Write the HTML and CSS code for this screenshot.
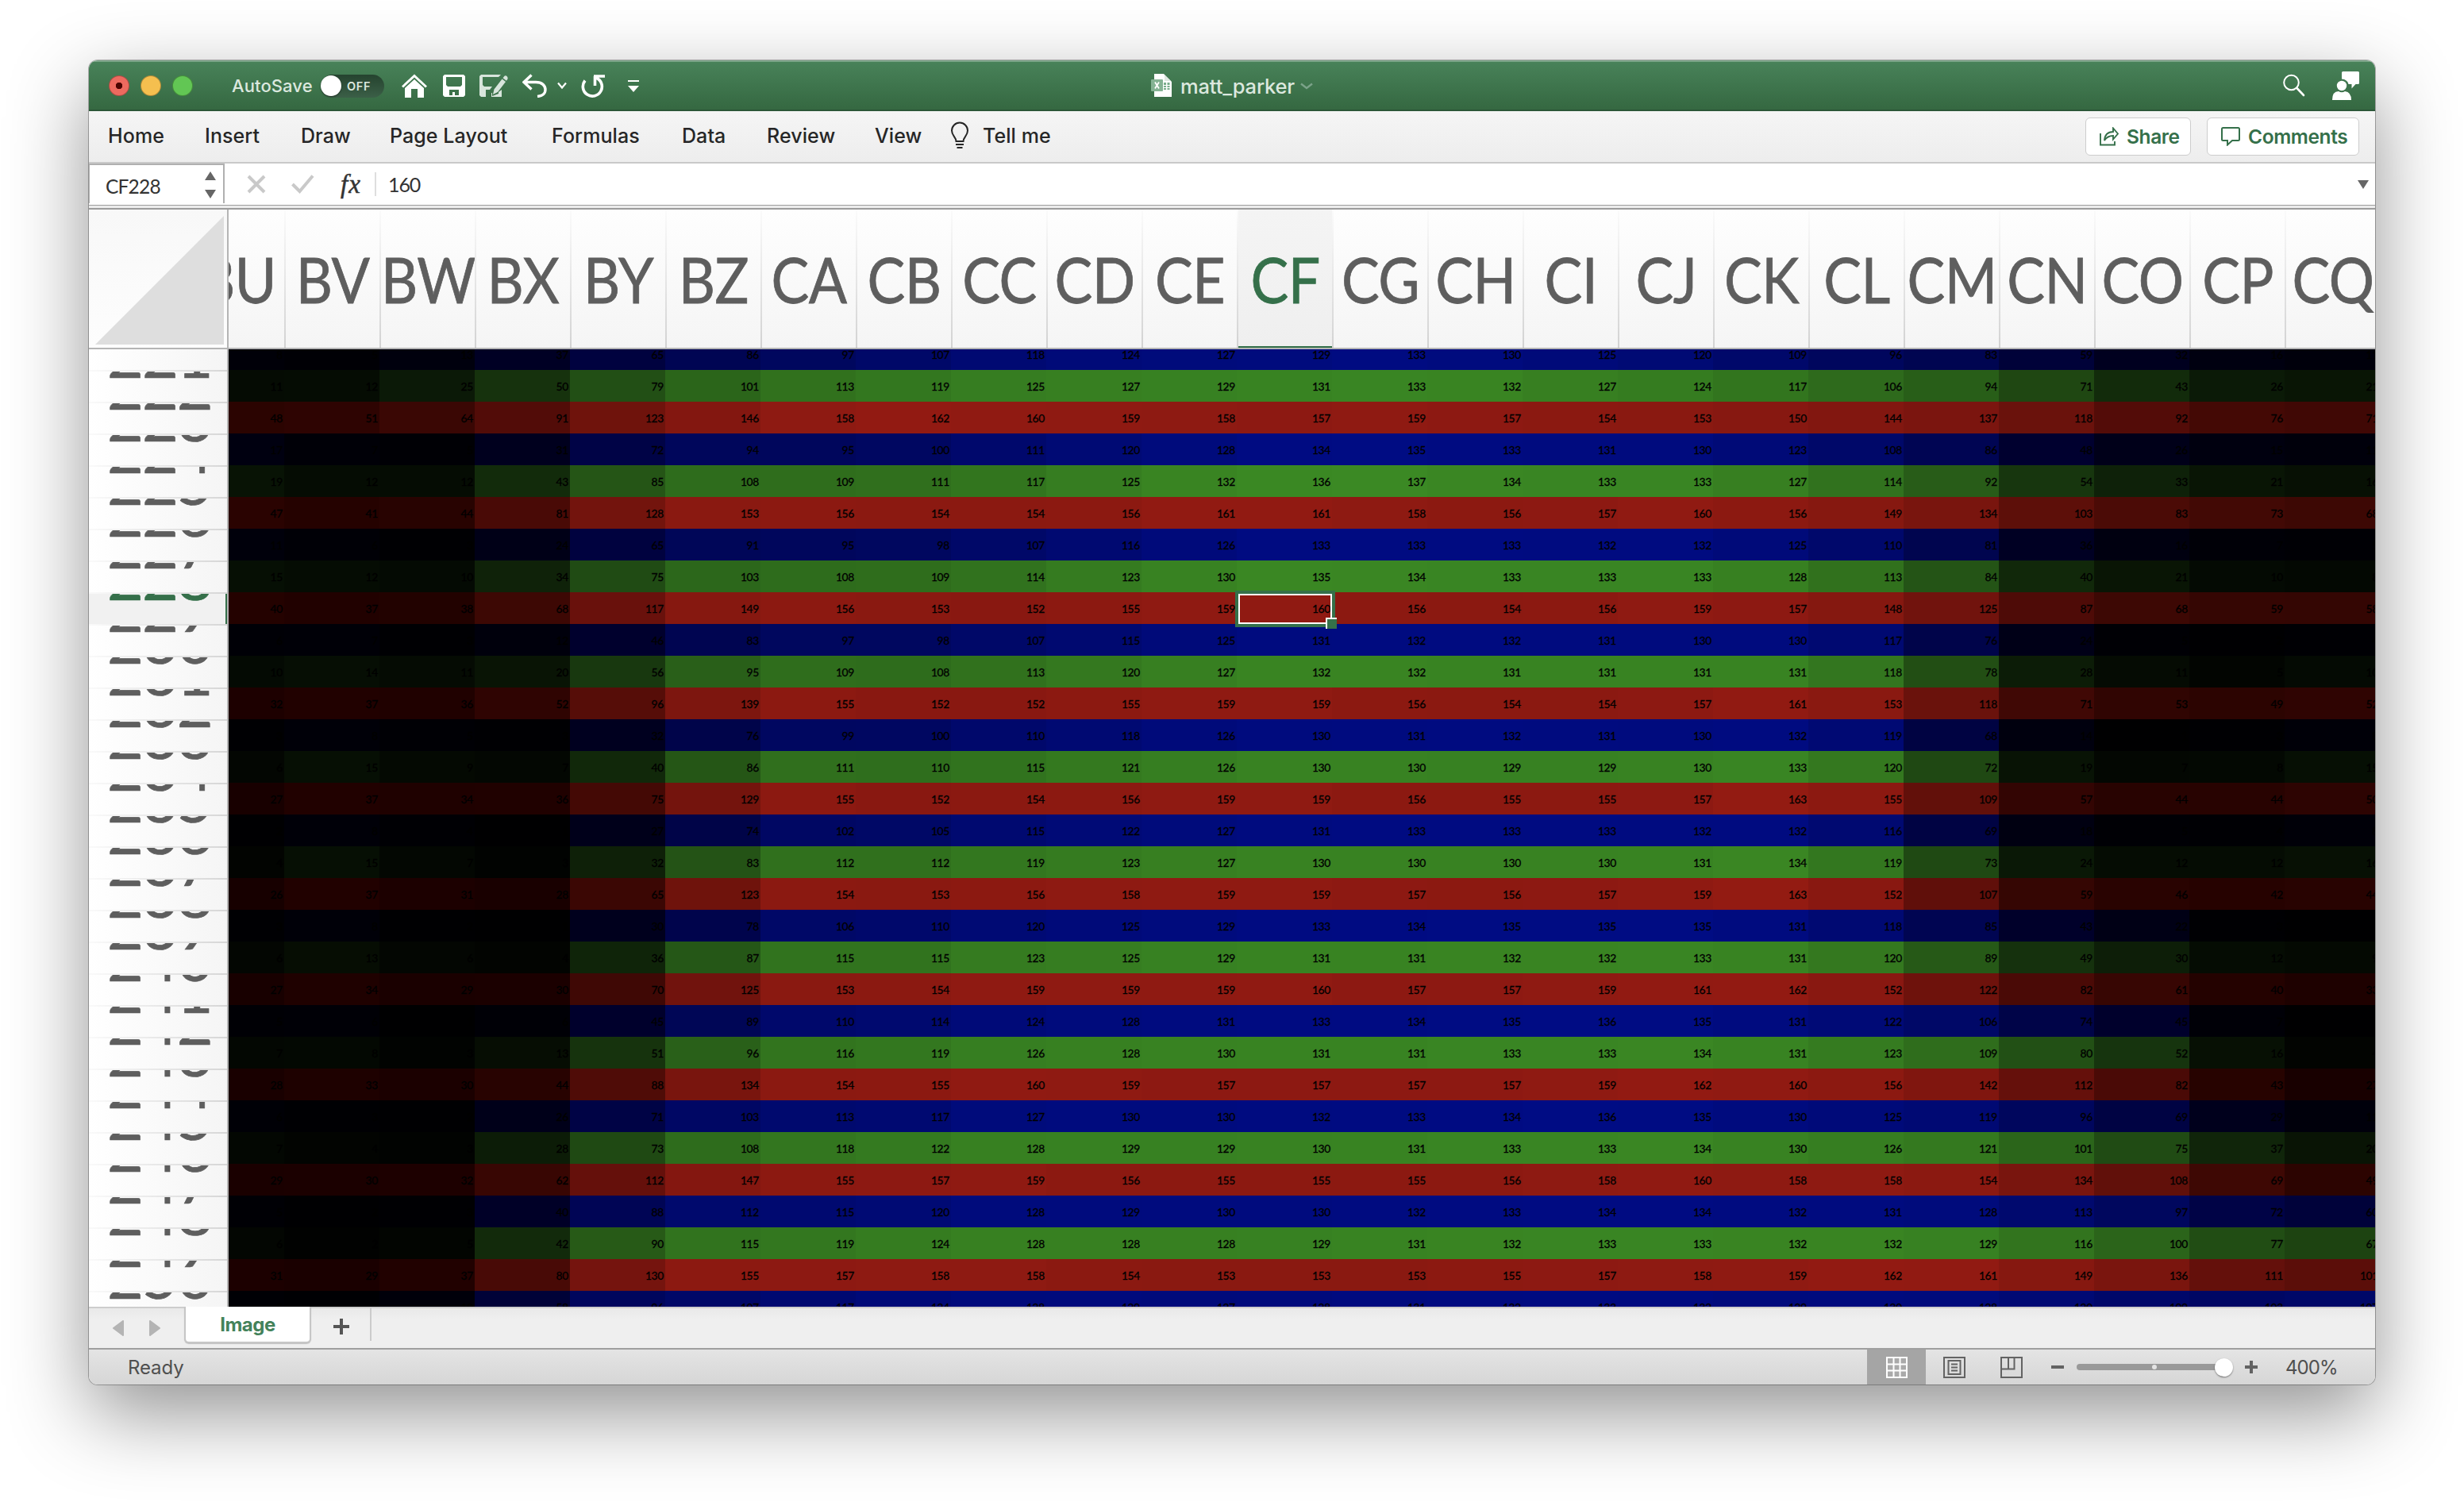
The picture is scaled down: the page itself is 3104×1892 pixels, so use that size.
FILE: index.html
```html
<!DOCTYPE html>
<html lang="en">
<head>
<meta charset="utf-8">
<title>matt_parker</title>
<link rel="stylesheet" href="styles.css">
</head>
<body>
<div class="window">
  <header class="titlebar">
    <div class="lights"><i class="light close"></i><i class="light min"></i><i class="light max"></i></div>
    <span class="autosave">AutoSave</span>
    <span class="toggle"><i class="knob"></i><b>OFF</b></span>
    <div class="quick">
      <svg width="32" height="30" viewBox="0 0 32 30"><path d="M1 16.500 16 2.500 31 16.500" fill="none" stroke="#fff" stroke-width="3"/><path d="M4 18 16 7 28 18V30H20V19H12V30H4Z" fill="#fff"/></svg>
      <svg width="28" height="28" viewBox="0 0 28 28"><path fill="#fff" fill-rule="evenodd" d="M2 0H26L28 2V26L26 28H2L0 26V2ZM4 3V13L6 15H22L24 13V3ZM8 19V28H12V22H15V28H20V19Z"/><path fill="#fff" d="M8 26H20V28H8Z"/></svg>
      <svg width="36" height="28" viewBox="0 0 36 28"><path fill="#d8e5dc" fill-rule="evenodd" d="M2 0H27L24 3H4V13L6 15H16L13 19H8V28H2L0 26V2ZM12 23H15V28H28V19L24 22V24L16 27V23Z"/><path d="M17 25 18.500 18.500 28.500 5.500 33 9 23 22Z" fill="#d8e5dc"/><path d="M29.500 4.300 31.500 1.800Q33 .8 34.500 2T35.500 5.200L34 7.700Z" fill="#d8e5dc"/></svg>
      <svg width="31" height="30" viewBox="0 0 31 30"><path d="M11.500 1.500 2 10.500 11.500 19.500M2.500 10.500H17C25 10.500 29 15 29 20S25 28 19 28.500" fill="none" stroke="#fff" stroke-width="3.400"/></svg>
      <svg width="12" height="10" viewBox="0 0 12 10"><path d="M1 1.500 6 7.500 11 1.500" fill="none" stroke="#fff" stroke-width="2.200"/></svg>
      <svg width="32" height="30" viewBox="0 0 32 30"><path d="M6 8.500A12 12 0 1 0 20 5M17 3H31M18.500 15V3" fill="none" stroke="#fff" stroke-width="3.600"/></svg>
      <svg width="14" height="16" viewBox="0 0 14 16"><path d="M0 1H14V3H0ZM0 8H14L7 16Z" fill="#fff"/></svg>
    </div>
    <div class="doc">
      <svg width="27" height="30" viewBox="0 0 27 30"><path d="M4 0H16L26 10V29H4Z" fill="#fff"/><path d="M17 1.500 25 9H17Z" fill="#dfe9e2"/><path d="M16 11H19V14H16ZM20.500 11H23.500V14H20.500ZM16 15H19V17H16ZM20.500 15H23.500V17H20.500ZM16 18H19V20H16ZM20.500 18H23.500V20H20.500Z" fill="#79ad8b"/><rect y="7" width="15" height="15" rx="1" fill="#85b394"/><path d="M5 10.500 10 18.500M10 10.500 5 18.500" stroke="#fff" stroke-width="1.800"/></svg>
      <span>matt_parker</span>
      <svg class="dim" width="16" height="9" viewBox="0 0 16 9"><path d="M1 1.500 8 7 15 1.500" fill="none" stroke="#7ba289" stroke-width="2.400"/></svg>
    </div>
    <div class="right">
      <svg width="28" height="30" viewBox="0 0 28 30"><circle cx="10.500" cy="11" r="9.300" fill="none" stroke="#fff" stroke-width="2"/><path d="M17.500 18 26 27" stroke="#fff" stroke-width="2.600" stroke-linecap="round"/></svg>
      <svg width="34" height="36" viewBox="0 0 34 36"><path d="M13.500 0H32.500Q34 0 34 1.500V14.500Q34 16 32.500 16H29.500L24.500 21.500V16H20.500Q19 10 12 9.500V1.500Q12 0 13.500 0Z" fill="#fff"/><circle cx="12" cy="18" r="6.200" fill="#fff"/><path d="M0 36Q0 25 8 25Q12 27.500 16 25Q24 26 24 36Z" fill="#fff"/></svg>
    </div>
  </header>

  <nav class="ribbon">
    <div class="tabs">
      <span>Home</span><span>Insert</span><span>Draw</span><span>Page Layout</span><span>Formulas</span><span>Data</span><span>Review</span><span>View</span>
      <span class="tell"><svg width="24" height="36" viewBox="0 0 24 36"><path d="M7.500 25C7.500 20 2 18 2 11.500A10 10 0 0 1 22 11.500C22 18 16.500 20 16.500 25Z" fill="none" stroke="#262626" stroke-width="2"/><path d="M7 29H17M8.500 33H15.500" stroke="#262626" stroke-width="2.200"/></svg>Tell me</span>
    </div>
    <button class="btn share"><svg width="24" height="24" viewBox="0 0 24 24"><path d="M1 8V22.500H19V18M6 17C6.500 9.500 11 6 17 6V1.500L23 8.500 17 15.500V11C12 11 8.500 13 6 17Z" fill="none" stroke="#35704a" stroke-width="1.900"/></svg>Share</button>
    <button class="btn comments"><svg width="24" height="24" viewBox="0 0 24 24"><path d="M2.500 1H21.500Q23 1 23 2.500V15.500Q23 17 21.500 17H14L8 22.500V17H2.500Q1 17 1 15.500V2.500Q1 1 2.500 1Z" fill="none" stroke="#35704a" stroke-width="2"/></svg>Comments</button>
  </nav>

  <div class="formula">
    <div class="namebox"><span>CF228</span><svg width="14" height="34" viewBox="0 0 14 34"><path d="M7 0 14 11H0ZM7 34 0 23H14Z" fill="#666"/></svg></div>
    <div class="fbtns">
      <svg width="24" height="24" viewBox="0 0 24 24"><path d="M2 2 22 22M22 2 2 22" stroke="#c9c9c9" stroke-width="4"/></svg>
      <svg width="29" height="24" viewBox="0 0 29 24"><path d="M1.500 12 10.500 21 27 1.500" fill="none" stroke="#c9c9c9" stroke-width="4"/></svg>
      <span class="fx">fx</span>
    </div>
    <div class="value">160</div>
    <svg class="drop" width="14" height="11" viewBox="0 0 14 11"><path d="M0 0H14L7 11Z" fill="#666"/></svg>
  </div>

  <main class="sheet">
    <div class="corner"><svg width="162" height="162" viewBox="0 0 162 162"><path d="M162 0V162H0Z" fill="#dedede"/></svg></div>
    <div class="colheads"><div class="colstrip" id="cols"></div></div>
    <div class="rowheads" id="rows"></div>
    <div class="cells"><div class="cellstrip" id="cells"></div></div>
  </main>

  <footer class="sheets">
    <div class="arrows"><svg width="60" height="20" viewBox="0 0 60 20"><path d="M13 1V19L1 10ZM47 1V19L59 10Z" fill="#b4b4b4" stroke="#b4b4b4" stroke-width="2" stroke-linejoin="round"/></svg></div>
    <div class="tab">Image</div>
    <div class="add"><svg width="20" height="20" viewBox="0 0 20 20"><path d="M10 0V20M0 10H20" stroke="#555" stroke-width="4"/></svg></div>
  </footer>

  <div class="status">
    <span class="ready">Ready</span>
    <div class="view on"><svg width="27" height="27" viewBox="0 0 27 27"><path d="M1 1H26V26H1ZM9.500 1V26M17.500 1V26M1 9.500H26M1 17.500H26" fill="#aaa" stroke="#fff" stroke-width="2"/></svg></div>
    <div class="view"><svg width="28" height="27" viewBox="0 0 28 27"><path d="M1 1H27V26H1ZM6.500 5H21.500V22H6.500ZM10 9.500H18M10 13.500H18M10 17.500H18" fill="none" stroke="#636363" stroke-width="2"/></svg></div>
    <div class="view"><svg width="28" height="27" viewBox="0 0 28 27"><path d="M1 1H27V26H1ZM1 15.500H17.500V1M10 1V15.500" fill="none" stroke="#636363" stroke-width="2"/></svg></div>
    <i class="minus"></i>
    <div class="slider"><i class="mid"></i><i class="thumb"></i></div>
    <svg class="plus" width="16" height="16" viewBox="0 0 16 16"><path d="M8 0V16M0 8H16" stroke="#636363" stroke-width="4"/></svg>
    <span class="zoom">400%</span>
  </div>
</div>
<script src="script.js"></script>
</body>
</html>
```
FILE: styles.css
```css
* { box-sizing: border-box; }
body {
  margin: 0;
  padding: 76px 112px 0;
  height: 1892px;
  background: #fff;
  overflow: hidden;
  font-family: Inter, "Liberation Sans", sans-serif;
}
svg { display: block; flex: none; }
i { display: block; flex: none; }
.window {
  width: 2880px;
  height: 1668px;
  display: flex;
  flex-direction: column;
  border-radius: 11px;
  overflow: hidden;
  background: #fff;
  box-shadow: 0 0 0 1px rgba(0,0,0,.28), 0 36px 100px rgba(0,0,0,.43);
}

/* title bar */
.titlebar {
  height: 64px;
  flex: none;
  display: grid;
  grid-template-columns: 180px 112px 102px 944px 1fr 96px;
  align-items: center;
  background: linear-gradient(#488259, #356841);
  border-top: 2px solid #7ba588;
  border-bottom: 2px solid #2b5738;
  color: #dce8df;
}
.lights { display: flex; gap: 14px; padding-left: 25px; }
.light { width: 26px; height: 26px; border-radius: 50%; border: 1px solid rgba(0,0,0,.28); }
.close { background: radial-gradient(circle, #4c0300 0 4px, #ed6a5f 4.500px); }
.min { background: #f5bf4f; }
.max { background: #62c654; }
.autosave { font-size: 22px; font-weight: 500; letter-spacing: .1px; }
.toggle {
  width: 80px;
  height: 29px;
  display: flex;
  align-items: center;
  gap: 7px;
  border-radius: 15px;
  background: linear-gradient(#25432f, #3b5f47);
}
.knob { width: 26px; height: 26px; border-radius: 50%; background: #fff; box-shadow: 0 1px 2px rgba(0,0,0,.5); }
.toggle b { font-size: 14.500px; font-weight: 600; letter-spacing: .7px; }
.quick { display: grid; grid-template-columns: 52px 46px 54px 44px 29px 60px 14px; align-items: center; }
.doc { display: flex; align-items: center; font-size: 25.500px; font-weight: 500; }
.doc span { margin: 0 7px 0 10px; letter-spacing: -.15px; }
.right { display: flex; align-items: center; width: 96px; justify-content: space-between; }
.titlebar .right { margin-left: -20px; }

/* ribbon */
.ribbon {
  height: 66px;
  flex: none;
  display: flex;
  align-items: center;
  gap: 20px;
  padding: 0 20px 0 24px;
  background: linear-gradient(#f5f5f5, #ededed);
  border-bottom: 2px solid #c9c9c9;
}
.tabs {
  flex: 1;
  display: grid;
  grid-template-columns: 122px 121px 112px 204px 164px 107px 136px 95px auto;
  align-items: center;
  padding-bottom: 2px;
  font-size: 25px;
  font-weight: 500;
  letter-spacing: .08px;
  color: #262626;
}
.tell { display: flex; align-items: center; gap: 17px; }
.btn {
  height: 48px;
  display: flex;
  align-items: center;
  gap: 10px;
  padding: 0 0 1px 17px;
  border: 1.500px solid #cdcdcd;
  border-radius: 6px;
  background: #fff;
  color: #35704a;
  font: 600 24.500px Inter, sans-serif;
  letter-spacing: -.4px;
  white-space: nowrap;
}
.share { width: 133px; }
.comments { width: 192px; }

/* formula bar */
.formula {
  height: 58px;
  flex: none;
  display: flex;
  align-items: center;
  padding-bottom: 6px;
  background: linear-gradient(#fff 0 52px, #9c9c9c 52px 53.500px, #ececec 53.500px 56px, #9c9c9c 56.500px);
  font-family: Lato, sans-serif;
  color: #333;
}
.namebox {
  width: 171px;
  height: 50px;
  align-self: flex-start;
  display: flex;
  align-items: center;
  justify-content: space-between;
  padding: 2px 9px 0 20px;
  border: 2px solid #b0b0b0;
  border-width: 2px 2px 0 1px;
  background: #fff;
  font-size: 24.500px;
}
.namebox span { letter-spacing: -.8px; padding-top: 3px; }
.fbtns { display: grid; grid-template-columns: 56px 62px 43px; align-items: center; padding-left: 28px; }
.fx { font: italic 33px "Liberation Serif", serif; line-height: 36px; letter-spacing: 1px; -webkit-text-stroke: .5px #333; }
.value {
  flex: 1;
  height: 30px;
  line-height: 31px;
  padding-left: 15px;
  border-left: 2px solid #dedede;
  font-size: 25px;
  letter-spacing: -1.100px;
}
.drop { margin-right: 8px; }

/* grid */
.sheet {
  height: 1382px;
  flex: none;
  display: grid;
  grid-template-columns: 176px 2704px;
  grid-template-rows: 176px 1206px;
  font-family: Lato, sans-serif;
  overflow: hidden;
}
.corner {
  padding: 8px 0 0 8px;
  border-right: 2px solid #b5b5b5;
  border-bottom: 2px solid #b5b5b5;
  background: linear-gradient(#f8f8f8, #fdfdfd);
}
.colheads { overflow: hidden; border-bottom: 2px solid #b5b5b5; }
.colstrip { display: flex; margin-left: -50px; width: 2760px; }
.col {
  width: 120px;
  height: 174px;
  flex: none;
  display: flex;
  justify-content: safe center;
  overflow: hidden;
  border-left: 2px solid;
  border-image: linear-gradient(#fbfbfb, #d2d2d2) 1;
  background: linear-gradient(#fefefe, #f5f5f5);
  color: #5e5e5e;
  font-size: 71.500px;
  line-height: 175px;
  -webkit-text-stroke: .7px;
}
.col span { letter-spacing: -.5px; transform: scaleY(1.105); }
.col.sel { background: linear-gradient(#f4f4f4, #efefef); color: #35704a; box-shadow: inset 0 -2px #35704a; }
.rowheads { overflow: hidden; border-right: 2px solid #b5b5b5; padding-top: 26px; background: linear-gradient(90deg, #fff, #f5f5f5); }
.row {
  height: 40px;
  overflow: hidden;
  padding-left: 23px;
  border-top: 2px solid;
  border-image: linear-gradient(90deg, #fafafa, #d6d6d6) 1;
  color: #5e5e5e;
  font-size: 79px;
  line-height: 79px;
  letter-spacing: -1.900px;
  -webkit-text-stroke: .7px;
}
.row span { display: block; margin-top: -62px; }
.row.sel { color: #35704a; background: #f1f1f1; box-shadow: inset -2px 0 #35704a; }
.cells { overflow: hidden; background: #000; }
.cellstrip {
  display: grid;
  grid-template-columns: repeat(23, 120px);
  grid-auto-rows: 40px;
  margin: -14px 0 0 -50px;
}
.cell {
  height: 40px;
  padding-right: 2px;
  text-align: right;
  font-size: 13.800px;
  line-height: 42px;
  letter-spacing: -.3px;
  -webkit-text-stroke: .3px #000;
  color: #000;
}
.red { background: rgb(calc(var(--v) * .9) calc(var(--v) * .2 - 6) calc(var(--v) * .15 - 6)); }
.green { background: rgb(calc(var(--v) * .43) var(--v) calc(var(--v) * .26)); }
.blue { background: rgb(0 calc(var(--v) * .13 - 6) calc(var(--v) * .97)); }
.cell.active { position: relative; }
.cursor {
  position: absolute;
  inset: -2px -4px -4px -2px;
  border: 4px solid #35704a;
}
.cursor::before { content: ""; position: absolute; inset: 0; border: 2px solid #fff; }
.cursor::after {
  content: "";
  position: absolute;
  right: -6px;
  bottom: -6px;
  width: 12px;
  height: 12px;
  background: #35704a;
  border: solid #fff;
  border-width: 2px 0 0 2px;
}

/* sheet tabs */
.sheets {
  height: 54px;
  flex: none;
  display: flex;
  border-top: 2px solid #cdcdcd;
  border-bottom: 2px solid #9f9f9f;
  background: linear-gradient(#e9e9e9, #efefef 14px);
}
.arrows { width: 120px; padding: 15px 0 0 30px; }
.tab {
  width: 160px;
  height: 46px;
  margin-top: -2px;
  border: 2px solid #c6c6c6;
  border-top: 0;
  border-radius: 0 0 6px 6px;
  box-shadow: 0 1px 1px rgba(0,0,0,.2);
  background: #fff;
  color: #43825a;
  font-size: 24px;
  font-weight: 700;
  letter-spacing: -.5px;
  line-height: 46px;
  text-align: center;
}
.add { width: 76px; height: 41px; padding: 13px 0 0 28px; border-right: 2px solid #cbcbcb; }

/* status bar */
.status {
  height: 44px;
  flex: none;
  display: flex;
  align-items: center;
  background: linear-gradient(#e4e4e4, #d6d6d6);
  color: #4f4f4f;
  font-size: 24px;
}
.ready { flex: 1; padding-left: 49px; letter-spacing: -.1px; }
.view { width: 72px; height: 44px; display: flex; align-items: center; justify-content: center; }
.view.on { width: 74px; background: #a5a5a5; }
.minus { width: 16px; height: 4px; margin-left: 14px; background: #636363; }
.slider {
  width: 196px;
  height: 8px;
  margin: 0 16px;
  display: flex;
  align-items: center;
  border-radius: 4px;
  background: linear-gradient(90deg, #999 186px, transparent 186px);
}
.mid { width: 6px; height: 6px; margin-left: 95px; border-radius: 50%; background: #e4e4e4; }
.thumb { width: 23px; height: 23px; margin-left: 73px; border-radius: 50%; background: #fff; box-shadow: 0 1px 2px rgba(0,0,0,.45); }
.zoom { width: 148px; padding-left: 35px; letter-spacing: -.9px; }
```
FILE: script.js
```javascript
const columns = "BU BV BW BX BY BZ CA CB CC CD CE CF CG CH CI CJ CK CL CM CN CO CP CQ".split(" ");
const data = `8 5 13 37 65 86 97 107 118 124 127 129 133 130 125 120 109 96 83 59 32 16 11
11 12 25 50 79 101 113 119 125 127 129 131 133 132 127 124 117 106 94 71 43 26 21
48 51 64 91 123 146 158 162 160 159 158 157 159 157 154 153 150 144 137 118 92 76 71
17 7 5 31 72 94 95 100 111 120 128 134 135 133 131 130 123 108 86 48 26 15 11
19 12 12 43 85 108 109 111 117 125 132 136 137 134 133 133 127 114 92 54 33 21 16
47 41 44 81 128 153 156 154 154 156 161 161 158 156 157 160 156 149 134 103 83 73 68
11 6 3 24 65 91 95 98 107 116 126 133 133 133 132 132 125 110 81 36 16 7 5
15 12 10 34 75 103 108 109 114 123 130 135 134 133 133 133 128 113 84 40 21 10 8
40 37 38 68 117 149 156 153 152 155 159 160 156 154 156 159 157 148 125 87 68 59 58
6 7 3 12 46 83 97 98 107 115 125 131 132 132 131 130 130 117 76 24 5 2 4
10 14 11 20 56 95 109 108 113 120 127 132 132 131 131 131 131 118 78 28 11 5 10
32 37 36 52 96 139 155 152 152 155 159 159 156 154 154 157 161 153 118 71 53 49 52
3 8 5 3 32 76 99 100 110 118 126 130 131 132 131 130 132 119 68 14 1 3 8
6 15 9 7 40 86 111 110 115 121 126 130 130 129 129 130 133 120 72 19 7 8 15
27 37 34 36 75 129 155 152 154 156 159 159 156 155 155 157 163 155 109 57 44 44 50
2 8 4 1 27 74 102 105 115 122 127 131 133 133 133 132 132 116 69 18 5 4 8
4 15 7 3 32 83 112 112 119 123 127 130 130 130 130 131 134 119 73 24 12 12 16
26 37 31 28 65 123 154 153 156 158 159 159 157 156 157 159 163 152 107 59 46 42 44
3 8 2 1 30 78 106 110 120 125 129 133 134 135 135 135 131 118 85 43 22 3 1
6 13 6 4 36 87 115 115 123 125 129 131 131 132 132 133 131 120 89 49 30 12 9
27 34 29 30 70 125 153 154 159 159 159 160 157 157 159 161 162 152 122 82 61 40 33
5 6 1 6 45 89 110 114 124 128 131 133 134 135 136 135 131 122 106 74 45 7 1
7 8 3 13 51 96 116 119 126 128 130 131 131 133 133 134 131 123 109 80 52 16 4
28 33 30 44 88 134 154 155 160 159 157 157 157 157 159 162 160 156 142 112 82 43 27
6 3 2 26 71 103 113 117 127 130 130 132 133 134 136 135 130 125 119 96 69 29 11
7 4 3 28 73 108 118 122 128 129 129 130 131 133 133 134 130 126 121 101 75 37 20
29 30 32 62 112 147 155 157 159 156 155 155 155 156 158 160 158 158 154 134 108 69 49
5 2 3 40 88 112 115 120 128 129 130 130 132 133 134 134 132 131 128 113 97 72 60
6 2 5 42 90 115 119 124 128 128 128 129 131 132 133 133 132 132 129 116 100 77 67
31 29 37 80 130 155 157 158 158 154 153 153 153 155 157 158 159 162 161 149 136 111 101
5 3 10 58 96 107 117 124 128 129 127 128 131 132 133 132 129 130 128 120 109 103 107`
  .split("\n").map(line => line.split(" "));
const channels = ["blue", "green", "red"];
const active = { row: 228, col: "CF" };
const firstRow = 220;

document.getElementById("cols").innerHTML = columns
  .map(c => `<div class="col${c === active.col ? " sel" : ""}"><span>${c}</span></div>`).join("");

document.getElementById("rows").innerHTML = data.slice(1)
  .map((_, i) => firstRow + 1 + i)
  .map(n => `<div class="row${n === active.row ? " sel" : ""}"><span>${n}</span></div>`).join("");

document.getElementById("cells").innerHTML = data.map((values, i) => values.map((v, j) => {
  const on = firstRow + i === active.row && columns[j] === active.col;
  return `<div class="cell ${channels[i % 3]}${on ? " active" : ""}" style="--v:${v}">${v}${on ? '<i class="cursor"></i>' : ""}</div>`;
}).join("")).join("");
```
